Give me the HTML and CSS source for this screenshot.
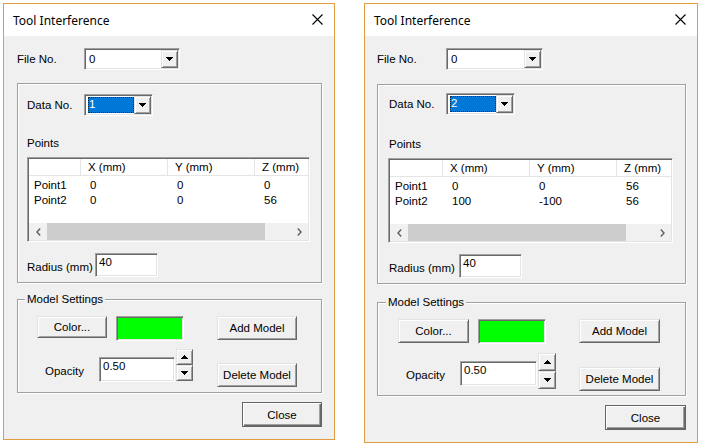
FILE: index.html
```html
<!DOCTYPE html>
<html>
<head>
<meta charset="utf-8">
<title>Tool Interference</title>
<link rel="stylesheet" href="styles.css">
</head>
<body>
<div class="desk">

  <div class="dlg dlg-a">
    <div class="titlebar">
      <span class="title">Tool Interference</span>
      <svg class="xicon" width="11" height="11" viewBox="0 0 11 11"><path d="M0.5 0.5L10.5 10.5M10.5 0.5L0.5 10.5" stroke="#000" stroke-width="1.1" fill="none"/></svg>
    </div>
    <div class="body">
      <div class="row file-row">
        <span class="lbl lbl-file">File No.</span>
        <div class="combo combo-file">
          <span class="combo-text">0</span>
          <span class="combo-btn"><svg width="7" height="4" viewBox="0 0 7 4"><path d="M0 0H7V1H6V2H5V3H4V4H3V3H2V2H1V1H0Z" fill="#000"/></svg></span>
        </div>
      </div>

      <div class="group g1">
        <div class="row data-row">
          <span class="lbl lbl-data">Data No.</span>
          <div class="combo combo-data">
            <span class="combo-sel">1</span>
            <span class="combo-btn"><svg width="7" height="4" viewBox="0 0 7 4"><path d="M0 0H7V1H6V2H5V3H4V4H3V3H2V2H1V1H0Z" fill="#000"/></svg></span>
          </div>
        </div>
        <div class="points-lbl">Points</div>
        <div class="list">
          <div class="lv-head"><span class="c1"></span><span>X (mm)</span><span>Y (mm)</span><span>Z (mm)</span></div>
          <div class="lv-rows">
            <div class="lv-row"><span class="c1">Point1</span><span>0</span><span>0</span><span>0</span></div>
            <div class="lv-row"><span class="c1">Point2</span><span>0</span><span>0</span><span>56</span></div>
          </div>
          <div class="hscroll">
            <span class="sb-btn sb-left"><svg width="5" height="8" viewBox="0 0 5 8"><polyline points="4.2,0.6 1,4 4.2,7.4" fill="none" stroke="#606060" stroke-width="1.4"/></svg></span>
            <span class="sb-thumb"></span>
            <span class="sb-track"></span>
            <span class="sb-btn"><svg width="5" height="8" viewBox="0 0 5 8"><polyline points="0.8,0.6 4,4 0.8,7.4" fill="none" stroke="#606060" stroke-width="1.4"/></svg></span>
          </div>
        </div>
        <div class="row radius-row">
          <span class="lbl lbl-radius">Radius (mm)</span>
          <div class="edit edit-radius">40</div>
        </div>
      </div>

      <div class="group g2">
        <span class="grp-title">Model Settings</span>
        <div class="ms-row1">
          <button class="btn btn-color">Color...</button>
          <div class="swatch"></div>
          <button class="btn btn-add">Add Model</button>
        </div>
        <div class="ms-row2">
          <span class="lbl lbl-op">Opacity</span>
          <div class="edit edit-op">0.50</div>
          <div class="spin">
            <span class="spin-btn"><svg width="7" height="4" viewBox="0 0 7 4"><path d="M3 0H4V1H5V2H6V3H7V4H0V3H1V2H2V1H3Z" fill="#000"/></svg></span>
            <span class="spin-btn"><svg width="7" height="4" viewBox="0 0 7 4"><path d="M0 0H7V1H6V2H5V3H4V4H3V3H2V2H1V1H0Z" fill="#000"/></svg></span>
          </div>
          <button class="btn btn-del">Delete Model</button>
        </div>
      </div>

      <div class="close-row"><button class="btn btn-default">Close</button></div>
    </div>
  </div>

  <div class="dlg dlg-b">
    <div class="titlebar">
      <span class="title">Tool Interference</span>
      <svg class="xicon" width="11" height="11" viewBox="0 0 11 11"><path d="M0.5 0.5L10.5 10.5M10.5 0.5L0.5 10.5" stroke="#000" stroke-width="1.1" fill="none"/></svg>
    </div>
    <div class="body">
      <div class="row file-row">
        <span class="lbl lbl-file">File No.</span>
        <div class="combo combo-file">
          <span class="combo-text">0</span>
          <span class="combo-btn"><svg width="7" height="4" viewBox="0 0 7 4"><path d="M0 0H7V1H6V2H5V3H4V4H3V3H2V2H1V1H0Z" fill="#000"/></svg></span>
        </div>
      </div>

      <div class="group g1">
        <div class="row data-row">
          <span class="lbl lbl-data">Data No.</span>
          <div class="combo combo-data">
            <span class="combo-sel">2</span>
            <span class="combo-btn"><svg width="7" height="4" viewBox="0 0 7 4"><path d="M0 0H7V1H6V2H5V3H4V4H3V3H2V2H1V1H0Z" fill="#000"/></svg></span>
          </div>
        </div>
        <div class="points-lbl">Points</div>
        <div class="list">
          <div class="lv-head"><span class="c1"></span><span>X (mm)</span><span>Y (mm)</span><span>Z (mm)</span></div>
          <div class="lv-rows">
            <div class="lv-row"><span class="c1">Point1</span><span>0</span><span>0</span><span>56</span></div>
            <div class="lv-row"><span class="c1">Point2</span><span>100</span><span>-100</span><span>56</span></div>
          </div>
          <div class="hscroll">
            <span class="sb-btn sb-left"><svg width="5" height="8" viewBox="0 0 5 8"><polyline points="4.2,0.6 1,4 4.2,7.4" fill="none" stroke="#606060" stroke-width="1.4"/></svg></span>
            <span class="sb-thumb"></span>
            <span class="sb-track"></span>
            <span class="sb-btn"><svg width="5" height="8" viewBox="0 0 5 8"><polyline points="0.8,0.6 4,4 0.8,7.4" fill="none" stroke="#606060" stroke-width="1.4"/></svg></span>
          </div>
        </div>
        <div class="row radius-row">
          <span class="lbl lbl-radius">Radius (mm)</span>
          <div class="edit edit-radius">40</div>
        </div>
      </div>

      <div class="group g2">
        <span class="grp-title">Model Settings</span>
        <div class="ms-row1">
          <button class="btn btn-color">Color...</button>
          <div class="swatch"></div>
          <button class="btn btn-add">Add Model</button>
        </div>
        <div class="ms-row2">
          <span class="lbl lbl-op">Opacity</span>
          <div class="edit edit-op">0.50</div>
          <div class="spin">
            <span class="spin-btn"><svg width="7" height="4" viewBox="0 0 7 4"><path d="M3 0H4V1H5V2H6V3H7V4H0V3H1V2H2V1H3Z" fill="#000"/></svg></span>
            <span class="spin-btn"><svg width="7" height="4" viewBox="0 0 7 4"><path d="M0 0H7V1H6V2H5V3H4V4H3V3H2V2H1V1H0Z" fill="#000"/></svg></span>
          </div>
          <button class="btn btn-del">Delete Model</button>
        </div>
      </div>

      <div class="close-row"><button class="btn btn-default">Close</button></div>
    </div>
  </div>

</div>
</body>
</html>
```

FILE: styles.css
```css
html, body {
  margin: 0;
  padding: 0;
  background: #ffffff;
}

.desk {
  display: flex;
  align-items: flex-start;
  gap: 29px;
  padding: 3px 0 0 3px;
}

.dlg {
  box-sizing: border-box;
  width: 332px;
  height: 437px;
  border: 1px solid #e39b3f;
  background: #f0f0f0;
  display: flex;
  flex-direction: column;
  font-family: "Liberation Sans", Arial, sans-serif;
  font-size: 11.5px;
  color: #000;
}

.dlg-b {
  width: 334px;
  height: 440px;
}

/* title bar */
.titlebar {
  flex: none;
  height: 32px;
  background: #ffffff;
  display: flex;
  align-items: center;
  justify-content: space-between;
  padding: 0 11px 0 9px;
}

.title {
  font-family: "Noto Sans", "Open Sans", sans-serif;
  font-size: 12px;
  color: #000;
}

.xicon {
  margin-top: -1px;
  display: block;
}

.body {
  display: flex;
  flex-direction: column;
  padding: 12px 12px 0 13px;
}

.dlg-b .body {
  padding: 12px 11px 0 12px;
}

.row {
  display: flex;
  align-items: center;
}

.lbl {
  flex: none;
  line-height: 14px;
  white-space: nowrap;
}

.lbl-file { width: 67px; }
.dlg-b .lbl-file { width: 69px; }

/* combo boxes */
.combo {
  box-sizing: border-box;
  height: 22px;
  padding: 1px;
  display: flex;
  align-items: stretch;
  background: #ffffff;
  border: 1px solid;
  border-color: #a0a0a0 #ffffff #ffffff #a0a0a0;
  box-shadow: inset 1px 1px 0 #696969, inset -1px -1px 0 #e3e3e3;
}

.combo-file { width: 96px; }
.dlg-b .combo-file { width: 97px; }
.combo-data { width: 69px; }

.combo-text {
  flex: 1;
  padding-left: 3px;
  line-height: 18px;
}

.combo-sel {
  box-sizing: border-box;
  width: 46px;
  height: 16px;
  margin: 1px 0 0 2px;
  padding-left: 1px;
  background: #0078d7;
  color: #ffffff;
  line-height: 15px;
  outline: 1px dotted #2a2a2a;
  outline-offset: -1px;
}

.combo-btn {
  box-sizing: border-box;
  width: 17px;
  height: 18px;
  margin-left: auto;
  display: flex;
  align-items: center;
  justify-content: center;
  background: #f0f0f0;
  border: 1px solid;
  border-color: #e3e3e3 #696969 #696969 #e3e3e3;
  box-shadow: inset 1px 1px 0 #ffffff, inset -1px -1px 0 #a0a0a0;
}

.combo-btn svg,
.spin-btn svg,
.sb-btn svg {
  display: block;
  shape-rendering: crispEdges;
}

.sb-btn svg { shape-rendering: auto; }

/* group boxes */
.group {
  box-sizing: border-box;
  border: 1px solid #a0a0a0;
  box-shadow: inset 1px 1px 0 #ffffff, 1px 1px 0 #ffffff;
}

.g1 {
  margin-top: 13px;
  height: 200px;
  padding: 10px 10px 0 9px;
  display: flex;
  flex-direction: column;
  align-items: flex-start;
}

.dlg-b .g1 {
  margin-top: 14px;
  padding-left: 11px;
  padding-top: 8px;
}

.lbl-data { width: 57px; }

.points-lbl {
  margin-top: 20px;
  line-height: 14px;
}

.dlg-b .points-lbl { margin-top: 22px; }

/* list view */
.list {
  box-sizing: border-box;
  width: 283px;
  height: 85px;
  margin-top: 7px;
  background: #ffffff;
  border: 1px solid;
  border-color: #a0a0a0 #ffffff #ffffff #a0a0a0;
  box-shadow: inset 1px 1px 0 #696969, inset -1px -1px 0 #e3e3e3;
  padding: 1px;
  display: flex;
  flex-direction: column;
  overflow: hidden;
}

.dlg-b .list {
  width: 285px;
  margin-left: -1px;
}

.lv-head,
.lv-row {
  display: grid;
  grid-template-columns: 52px 87px 87px 80px;
  white-space: nowrap;
}

.dlg-b .lv-head,
.dlg-b .lv-row {
  grid-template-columns: 53px 87px 87px 80px;
}

.lv-head {
  box-sizing: border-box;
  height: 17px;
  border-bottom: 1px solid #e5e5e5;
  background: #ffffff;
}

.lv-head span {
  box-sizing: border-box;
  border-right: 1px solid #e5e5e5;
  padding-left: 7px;
  line-height: 16px;
}

.lv-rows {
  flex: 1;
  padding-top: 2px;
}

.lv-row span {
  padding-left: 9px;
  line-height: 15px;
}

.lv-row .c1 { padding-left: 5px; }

.hscroll {
  flex: none;
  height: 17px;
  display: flex;
  background: #f0f0f0;
}

.sb-btn {
  flex: none;
  width: 17px;
  display: flex;
  align-items: center;
  justify-content: center;
}

.sb-left { width: 18px; }

.sb-thumb {
  flex: none;
  width: 218px;
  background: #cdcdcd;
}

.sb-track { flex: 1; }

/* edits */
.edit {
  box-sizing: border-box;
  background: #ffffff;
  border: 1px solid;
  border-color: #a0a0a0 #ffffff #ffffff #a0a0a0;
  box-shadow: inset 1px 1px 0 #696969, inset -1px -1px 0 #e3e3e3;
  padding: 1px 0 0 3px;
  line-height: 14px;
}

.radius-row {
  margin-top: 11px;
  align-items: flex-end;
}

.lbl-radius {
  width: 68px;
  margin-bottom: 3px;
}

.dlg-b .lbl-radius { width: 70px; }

.edit-radius {
  width: 63px;
  height: 24px;
}

/* model settings */
.g2 {
  margin-top: 16px;
  height: 94px;
  padding: 0 0 0 19px;
  display: flex;
  flex-direction: column;
}

.dlg-b .g2 {
  margin-top: 18px;
  padding-left: 20px;
}

.grp-title {
  align-self: flex-start;
  margin: -8px 0 0 -12px;
  padding: 0 2px;
  background: #f0f0f0;
  line-height: 14px;
}

.ms-row1 {
  margin-top: 10px;
  display: flex;
  align-items: flex-start;
}

.btn {
  box-sizing: border-box;
  margin: 0;
  padding: 0;
  font: inherit;
  color: #000;
  background: #f0f0f0;
  border: 1px solid;
  border-color: #e3e3e3 #696969 #696969 #e3e3e3;
  box-shadow: inset 1px 1px 0 #ffffff, inset -1px -1px 0 #a0a0a0;
  line-height: 14px;
}

.btn-color {
  width: 70px;
  height: 22px;
}

.dlg-b .btn-color {
  width: 71px;
  height: 24px;
}

.swatch {
  box-sizing: border-box;
  width: 68px;
  height: 25px;
  margin-left: 9px;
  background: #00ff00;
  border: 1px solid;
  border-color: #a0a0a0 #ffffff #ffffff #a0a0a0;
  box-shadow: inset 1px 1px 0 #696969, inset -1px -1px 0 #e3e3e3;
}

.btn-add {
  width: 80px;
  height: 24px;
  margin-left: 33px;
}

.dlg-b .btn-add { width: 81px; }

.ms-row2 {
  margin-top: 8px;
  display: flex;
  align-items: flex-start;
}

.dlg-b .ms-row2 { margin-top: 9px; }

.lbl-op {
  width: 54px;
  margin: 15px 0 0 8px;
}

.edit-op {
  width: 76px;
  height: 25px;
  margin-top: 8px;
}

.dlg-b .edit-op { width: 77px; }

.spin {
  margin-left: 1px;
  display: flex;
  flex-direction: column;
}

.spin-btn {
  box-sizing: border-box;
  width: 17px;
  height: 16px;
  display: flex;
  align-items: center;
  justify-content: center;
  background: #f0f0f0;
  border: 1px solid;
  border-color: #e3e3e3 #696969 #696969 #e3e3e3;
  box-shadow: inset 1px 1px 0 #ffffff, inset -1px -1px 0 #a0a0a0;
}

.dlg-b .spin-btn {
  width: 18px;
  height: 18px;
}

.btn-del {
  width: 80px;
  height: 24px;
  margin: 14px 0 0 24px;
}

.dlg-b .btn-del {
  width: 81px;
  margin-left: 23px;
}

.close-row {
  margin-top: 9px;
  display: flex;
  justify-content: flex-end;
}

.btn-default {
  width: 80px;
  height: 25px;
  border: 1px solid #646464;
  box-shadow: inset 1px 1px 0 #ffffff, inset -1px -1px 0 #696969, inset -2px -2px 0 #a0a0a0;
}

.dlg-b .btn-default { width: 81px; }
```
